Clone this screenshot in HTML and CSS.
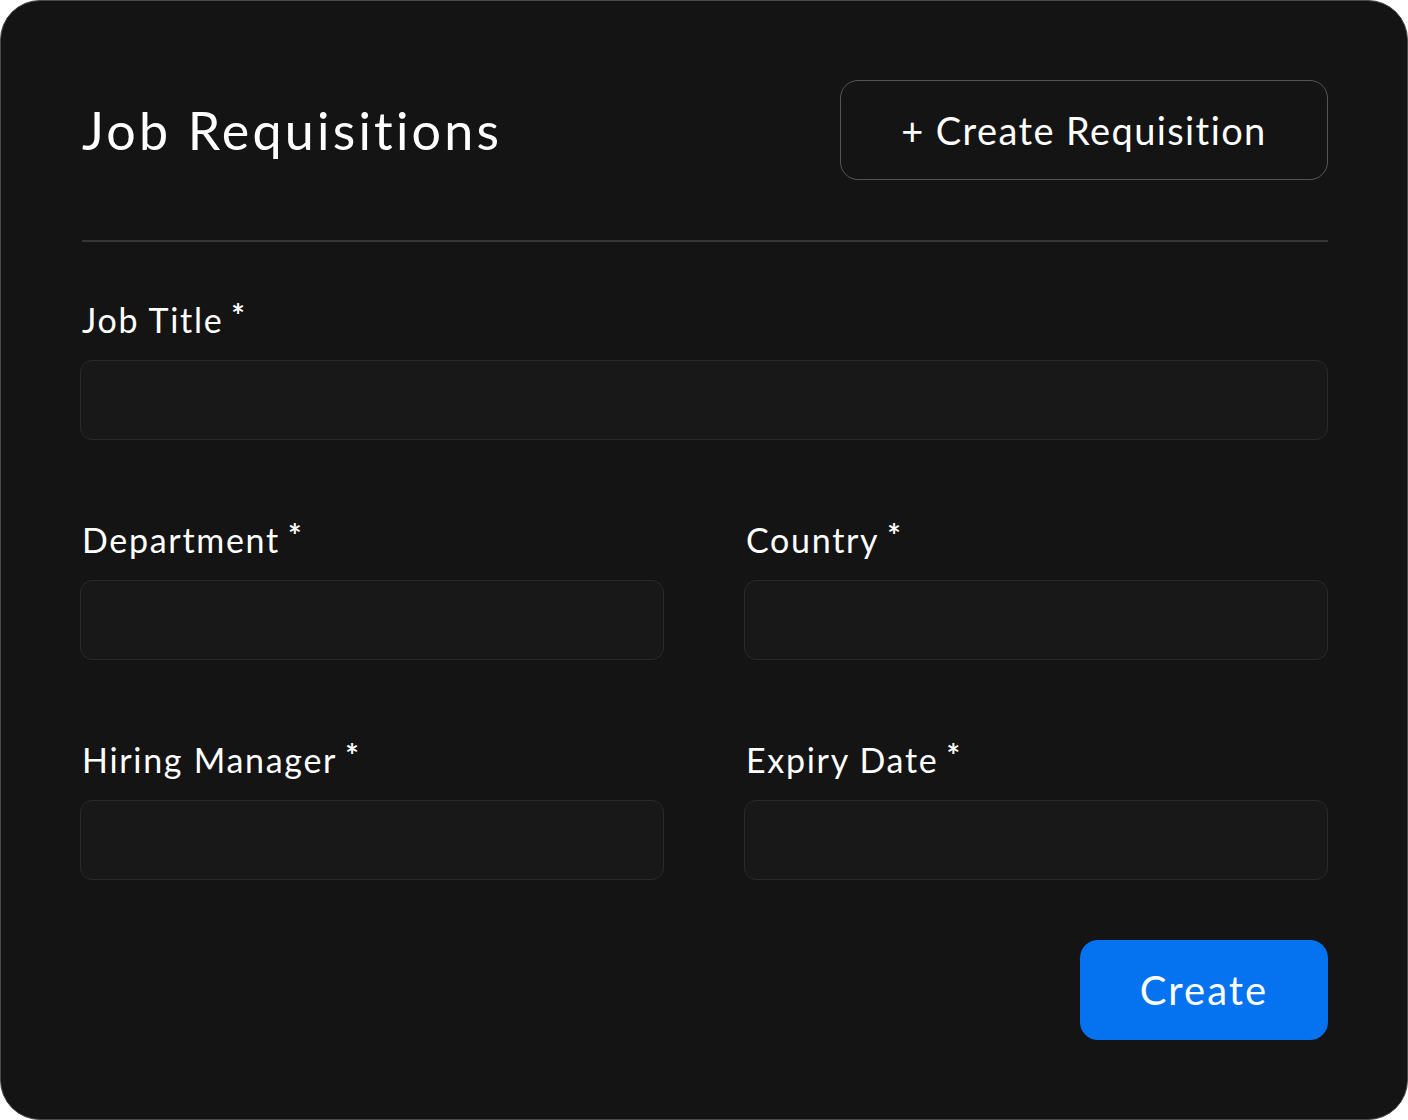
FILE: index.html
```html
<!DOCTYPE html>
<html lang="en">
<head>
    <meta charset="UTF-8">
    <meta name="viewport" content="width=device-width, initial-scale=1.0">
    <title>Job Requisitions</title>
    <link rel="stylesheet" href="styles.css">
</head>
<body>
    <div class="card">
        <div class="header">
            <h1>Job Requisitions</h1>
            <button type="button" class="btn-outline">+ Create Requisition</button>
        </div>
        <hr class="divider">
        <form id="requisitionForm">
            <div class="field">
                <label for="job_title">Job Title<span class="req">*</span></label>
                <input type="text" id="job_title" name="job_title" required>
            </div>
            <div class="row">
                <div class="field">
                    <label for="department">Department<span class="req">*</span></label>
                    <input type="text" id="department" name="department" required>
                </div>
                <div class="field">
                    <label for="country">Country<span class="req">*</span></label>
                    <input type="text" id="country" name="country" required>
                </div>
            </div>
            <div class="row">
                <div class="field">
                    <label for="hiring_manager">Hiring Manager<span class="req">*</span></label>
                    <input type="text" id="hiring_manager" name="hiring_manager" required>
                </div>
                <div class="field">
                    <label for="expiry_date">Expiry Date<span class="req">*</span></label>
                    <input type="text" id="expiry_date" name="expiry_date" required>
                </div>
            </div>
            <div class="actions">
                <button type="submit" class="btn-primary">Create</button>
            </div>
        </form>
    </div>
</body>
</html>
```

FILE: styles.css
```css
body {
    font-family: Lato, "Open Sans", sans-serif;
    font-variant-ligatures: none;
    background-color: #fff;
    color: #fff;
    margin: 0;
    padding: 0;
}
.card {
    box-sizing: border-box;
    width: 1408px;
    height: 1120px;
    padding: 79px;
    background: #141414;
    border: 1px solid #4a4a4a;
    border-radius: 40px;
}
.header {
    display: flex;
    justify-content: space-between;
    align-items: center;
    height: 100px;
}
h1 {
    margin: 0 0 0 2px;
    font-size: 52px;
    font-weight: 400;
    letter-spacing: 3.2px;
    color: #fff;
}
.divider {
    margin: 60px 0 0 2px;
    border: none;
    height: 2px;
    background: #363636;
}
form {
    display: flex;
    flex-direction: column;
    gap: 80px;
    margin-top: 58px;
}
.row {
    display: grid;
    grid-template-columns: 1fr 1fr;
    gap: 80px;
}
.field {
    display: flex;
    flex-direction: column;
}
label {
    height: 40px;
    font-size: 34px;
    line-height: 40px;
    letter-spacing: 1.7px;
    margin-bottom: 20px;
    padding-left: 2px;
}
.req {
    position: relative;
    top: -5px;
    margin-left: 8px;
    font-size: 32px;
    line-height: 1;
    font-weight: 700;
}
input {
    box-sizing: border-box;
    height: 80px;
    background: #181818;
    border: 1px solid #2a2a2a;
    border-radius: 12px;
    color: #fff;
    font: inherit;
    font-size: 28px;
    padding: 0 24px;
}
button {
    font-family: inherit;
    font-variant-ligatures: none;
    cursor: pointer;
    color: #fff;
}
.btn-outline {
    box-sizing: border-box;
    width: 488px;
    height: 100px;
    background: transparent;
    border: 1px solid #555;
    border-radius: 18px;
    font-size: 38px;
    letter-spacing: 1.4px;
}
.actions {
    display: flex;
    justify-content: flex-end;
    margin-top: -20px;
}
.btn-primary {
    width: 248px;
    height: 100px;
    background-color: #0573ef;
    border: none;
    border-radius: 18px;
    font-size: 40px;
    letter-spacing: 2px;
}
```
